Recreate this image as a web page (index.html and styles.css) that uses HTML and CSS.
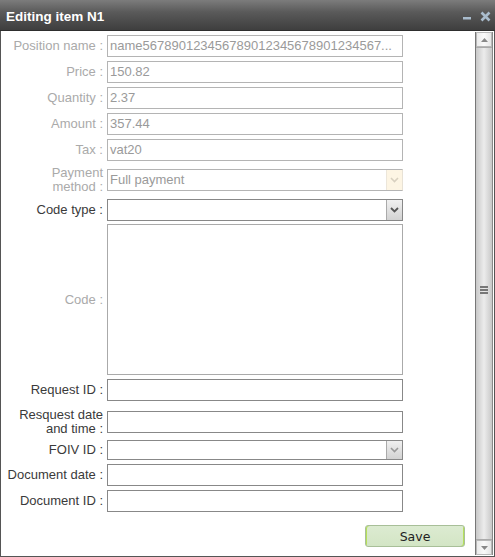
FILE: index.html
```html
<!DOCTYPE html>
<html>
<head>
<meta charset="utf-8">
<link rel="stylesheet" href="styles.css">
</head>
<body>
<div class="window">
  <div class="titlebar">
    <span class="title">Editing item N1</span>
    <span class="tools">
      <svg class="tool" width="10" height="10" viewBox="0 0 10 10"><rect x="1" y="6" width="8" height="2.5" fill="#a9bccd"/></svg>
      <svg class="tool" width="11" height="11" viewBox="0 0 11 11"><path d="M1.5 1.5 L9.5 9.5 M9.5 1.5 L1.5 9.5" stroke="#a9bccd" stroke-width="2.6"/></svg>
    </span>
  </div>
  <div class="body">
    <div class="content">
      <div class="row"><div class="lbl dis">Position name :</div><div class="inp dis">name567890123456789012345678901234567...</div></div>
      <div class="row"><div class="lbl dis">Price :</div><div class="inp dis">150.82</div></div>
      <div class="row"><div class="lbl dis">Quantity :</div><div class="inp dis">2.37</div></div>
      <div class="row"><div class="lbl dis">Amount :</div><div class="inp dis">357.44</div></div>
      <div class="row"><div class="lbl dis">Tax :</div><div class="inp dis">vat20</div></div>
      <div class="row tall"><div class="lbl dis">Payment<br>method :</div><div class="inp sel dis"><span class="val">Full payment</span><span class="btn btn-dis"><svg width="9" height="6" viewBox="0 0 9 6"><path d="M1 1 L4.5 4.5 L8 1" fill="none" stroke="#d8d0c0" stroke-width="1.6"/></svg></span></div></div>
      <div class="row"><div class="lbl">Code type :</div><div class="inp sel"><span class="val"></span><span class="btn"><svg width="9" height="6" viewBox="0 0 9 6"><path d="M1 1 L4.5 4.5 L8 1" fill="none" stroke="#555" stroke-width="1.8"/></svg></span></div></div>
      <div class="row code"><div class="lbl dis">Code :</div><div class="area"></div></div>
      <div class="row"><div class="lbl">Request ID :</div><div class="inp"></div></div>
      <div class="row tall2"><div class="lbl">Resquest date<br>and time :</div><div class="inp"></div></div>
      <div class="row short"><div class="lbl">FOIV ID :</div><div class="inp sel short-sel"><span class="val"></span><span class="btn"><svg width="9" height="6" viewBox="0 0 9 6"><path d="M1 1 L4.5 4.5 L8 1" fill="none" stroke="#999" stroke-width="1.6"/></svg></span></div></div>
      <div class="row"><div class="lbl">Document date :</div><div class="inp"></div></div>
      <div class="row"><div class="lbl">Document ID :</div><div class="inp"></div></div>
      <div class="actions"><button class="save">Save</button></div>
    </div>
    <div class="scrollbar">
      <div class="sb-btn"><svg width="7" height="4" viewBox="0 0 7 4"><path d="M0 4 L3.5 0 L7 4 Z" fill="#888"/></svg></div>
      <div class="sb-thumb"><span class="grip"></span></div>
      <div class="sb-btn"><svg width="7" height="4" viewBox="0 0 7 4"><path d="M0 0 L3.5 4 L7 0 Z" fill="#888"/></svg></div>
    </div>
  </div>
</div>
</body>
</html>
```
FILE: styles.css
```css
html, body {
  margin: 0;
  padding: 0;
  background: #fff;
}
body {
  font-family: "Liberation Sans", Arial, sans-serif;
  font-size: 13px;
}
.window {
  width: 495px;
  height: 557px;
  box-sizing: border-box;
  border-left: 1px solid #555;
  border-right: 1px solid #555;
  border-bottom: 1px solid #555;
  display: flex;
  flex-direction: column;
}
.titlebar {
  height: 31px;
  box-sizing: border-box;
  margin-left: -1px;
  margin-right: -1px;
  background: linear-gradient(#7c7c7c 0%, #5a5a5a 40%, #3e3e3e 100%);
  border-bottom: 1px solid #2e2e2e;
  display: flex;
  align-items: center;
  justify-content: space-between;
  padding: 0 4px 0 6px;
}
.title {
  color: #fff;
  font-weight: bold;
  font-size: 13.5px;
  margin-top: 2px;
}
.tools {
  display: flex;
  align-items: center;
  gap: 8px;
  margin-top: 2px;
}
.tool { display: block; }
.body {
  flex: 1;
  display: flex;
  min-height: 0;
}
.content {
  flex: 1;
  padding-top: 4px;
  display: flex;
  flex-direction: column;
}
.row {
  display: flex;
  align-items: center;
  min-height: 22px;
  margin-bottom: 4px;
}
.row.tall { min-height: 30px; }
.row.tall2 { min-height: 32px; margin-top: 1px; margin-bottom: 2px; }
.row.short { min-height: 20px; }
.row.code { margin-top: -1px; }
.lbl {
  width: 103px;
  box-sizing: border-box;
  text-align: right;
  color: #3a3a3a;
  line-height: 14px;
  flex: none;
  padding-right: 1px;
}
.lbl.dis { color: #aaaaaa; }
.inp {
  width: 296px;
  height: 22px;
  box-sizing: border-box;
  margin-left: 3px;
  border: 1px solid #888;
  background: #fff;
  color: #333;
  line-height: 20px;
  padding-left: 2px;
  white-space: nowrap;
  overflow: hidden;
  display: flex;
  align-items: center;
}
.inp.dis {
  border-color: #b4b4b4;
  color: #9a9a9a;
}
.inp.sel {
  padding-right: 0;
}
.inp.short-sel { height: 20px; }
.val { flex: 1; }
.btn {
  width: 16px;
  height: 20px;
  box-sizing: border-box;
  border-left: 1px solid #aaa;
  background: linear-gradient(#f0f0f0, #d2d2d2);
  display: flex;
  align-items: center;
  justify-content: center;
}
.short-sel .btn { height: 18px; }
.btn-dis {
  background: #fdf5e4;
  border-left: 1px solid #ece6da;
}
.inp.sel.dis { border-right-color: #e8e2d6; }
.area {
  width: 296px;
  height: 151px;
  box-sizing: border-box;
  margin-left: 3px;
  border: 1px solid #aaa;
  background: #fff;
}
.actions {
  display: flex;
  justify-content: flex-end;
  padding-right: 10px;
  margin-top: 9px;
}
.save {
  width: 100px;
  height: 22px;
  border: 1px solid #a8bf98;
  border-radius: 3px;
  background: linear-gradient(#dcebd1, #d3e5c5);
  box-shadow: inset 2px 1px 0 -1px #b6e05a, inset -2px -1px 0 -1px #b6e05a;
  font-family: "DejaVu Sans", Verdana, sans-serif;
  font-size: 12.5px;
  color: #222;
  padding: 0;
}
.scrollbar {
  width: 16px;
  margin: 1px 1px 1px 0;
  display: flex;
  flex-direction: column;
  border-left: 1px solid #777;
  border-right: 1px solid #888;
  background: linear-gradient(90deg, #c8c8c8, #ececec 50%, #c8c8c8);
}
.sb-btn {
  height: 15px;
  flex: none;
  display: flex;
  align-items: center;
  justify-content: center;
  background: linear-gradient(90deg, #eaeaea, #fafafa 50%, #e6e6e6);
  border: 1px solid #b8b8b8;
  box-sizing: border-box;
}
.sb-thumb {
  flex: 1;
  display: flex;
  align-items: center;
  justify-content: center;
  border-top: 1px solid #aaa;
  border-bottom: 1px solid #aaa;
}
.grip {
  width: 8px;
  height: 9px;
  background: repeating-linear-gradient(#777 0 2px, transparent 2px 3px);
  margin-top: -7px;
}
```
